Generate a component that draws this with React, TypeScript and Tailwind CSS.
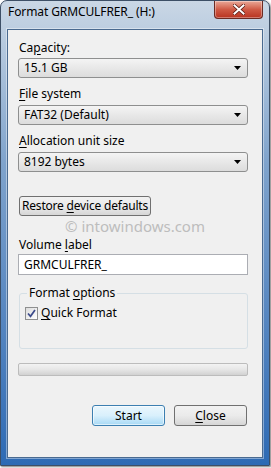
import React from "react";

const font = { fontFamily: '"Noto Sans", "Open Sans", sans-serif' };

function U({ children }: { children: React.ReactNode }) {
  return <span className="underline underline-offset-2">{children}</span>;
}

function Combo({ value }: { value: string }) {
  return (
    <div className="flex h-[20px] w-[230px] items-center justify-between rounded-[3px] border border-[#8e8f8f] bg-gradient-to-b from-[#f4f4f4] to-[#dcdcdc] pl-[5px] pr-[6px] text-[12px] leading-none text-black">
      <span>{value}</span>
      <svg width="7" height="4" viewBox="0 0 7 4">
        <path d="M0 0h7L3.5 4z" fill="#000" />
      </svg>
    </div>
  );
}

function Label({ children, mt }: { children: React.ReactNode; mt: string }) {
  return <div className={`${mt} h-[16px] pl-[1px] text-[12px] leading-[16px] text-black`}>{children}</div>;
}

export default function App() {
  return (
    <div className="h-[468px] w-[271px] bg-white" style={font}>
      <div className="flex h-[466px] w-[270px] flex-col rounded-t-[7px] border border-[#3d4f66] bg-gradient-to-b from-[#cad7e5] via-[#7fa3cc] via-35% to-[#2d6ab4] shadow-[1px_1px_2px_rgba(0,0,0,0.5)]">
        {/* title bar */}
        <div className="flex h-[28px] items-start justify-between">
          <div className="pl-[7px] pt-[3px] text-[12px] leading-[16px] tracking-[-0.1px] text-black">
            Format GRMCULFRER_ (H:)
          </div>
          <div className="mr-[6px] flex h-[18px] w-[49px] items-center justify-center rounded-b-[4px] border border-t-0 border-[#6b2b23] bg-gradient-to-b from-[#e9a898] via-[#cf5a45] to-[#b8321f] shadow-[inset_0_0_0_1px_rgba(255,255,255,0.35)]">
            <svg width="12" height="11" viewBox="0 0 12 11">
              <path d="M1.5 1.5l9 8M10.5 1.5l-9 8" stroke="#5a1a12" strokeWidth="3.6" strokeLinecap="square" />
              <path d="M1.5 1.5l9 8M10.5 1.5l-9 8" stroke="#fff" strokeWidth="2" strokeLinecap="square" />
            </svg>
          </div>
        </div>

        {/* client area */}
        <div className="mx-[6px] mb-[7px] flex flex-1 flex-col border border-[#4a6a90] bg-[#f0f0f0] pl-[10px] text-black shadow-[0_0_0_1px_rgba(255,255,255,0.4)]">
          <Label mt="mt-[10px]">
            Ca<U>p</U>acity:
          </Label>
          <div className="mt-[2px]">
            <Combo value="15.1 GB" />
          </div>

          <Label mt="mt-[8px]">
            <U>F</U>ile system
          </Label>
          <div className="mt-[3px]">
            <Combo value="FAT32 (Default)" />
          </div>

          <Label mt="mt-[8px]">
            <U>A</U>llocation unit size
          </Label>
          <div className="mt-[3px]">
            <Combo value="8192 bytes" />
          </div>

          <button className="ml-[1px] mt-[24px] flex h-[20px] w-[132px] items-center justify-center whitespace-nowrap rounded-[3px] border border-[#707070] bg-gradient-to-b from-[#f2f2f2] via-[#ebebeb] via-50% to-[#d6d6d6] text-[12px] leading-none tracking-[-0.2px]">
            <span>
              Restore <U>d</U>evice defaults
            </span>
          </button>

          <div className="mt-[3px] h-[15px] pr-[10px] text-center text-[15px] leading-[14px] text-[#bdbdbd]">
            © intowindows.com
          </div>

          <Label mt="mt-[3px]">
            Volume <U>l</U>abel
          </Label>
          <div className="mt-[1px] flex h-[21px] w-[230px] items-center border border-[#abadb3] bg-white pl-[5px] text-[12px] leading-none">
            GRMCULFRER_
          </div>

          <fieldset className="ml-[1px] mt-[10px] h-[64px] w-[229px] rounded-[3px] border border-[#d5dfe5] px-[5px]">
            <legend className="ml-[2px] px-[2px] text-[12px] leading-[16px]">
              Format <U>o</U>ptions
            </legend>
            <div className="mt-[4px] flex items-center gap-[3px] text-[12px] leading-[16px]">
              <div className="flex h-[13px] w-[13px] items-center justify-center border border-[#8e8f8f] bg-gradient-to-br from-[#dcdcdc] to-[#ffffff]">
                <svg width="9" height="9" viewBox="0 0 9 9">
                  <path d="M1 4.5l2.5 2.8L8 1" stroke="#3b4a8a" strokeWidth="1.7" fill="none" />
                </svg>
              </div>
              <span>
                <U>Q</U>uick Format
              </span>
            </div>
          </fieldset>

          <div className="mt-[14px] h-[13px] w-[230px] rounded-[2px] border border-[#bcbcbc] bg-gradient-to-b from-[#f3f3f3] via-[#e6e6e6] to-[#d2d2d2]" />

          <div className="mt-[29px] flex gap-[9px] pl-[74px]">
            <button className="flex h-[21px] w-[73px] items-center justify-center rounded-[3px] border border-[#3c7fb1] bg-gradient-to-b from-[#eaf6fd] via-[#d9f0fc] via-50% to-[#a7d9f5] text-[12px] leading-none shadow-[inset_0_0_0_1px_rgba(255,255,255,0.6)]">
              Start
            </button>
            <button className="flex h-[21px] w-[73px] items-center justify-center rounded-[3px] border border-[#707070] bg-gradient-to-b from-[#f2f2f2] via-[#ebebeb] via-50% to-[#d6d6d6] text-[12px] leading-none">
              <span>
                <U>C</U>lose
              </span>
            </button>
          </div>
        </div>
      </div>
    </div>
  );
}
